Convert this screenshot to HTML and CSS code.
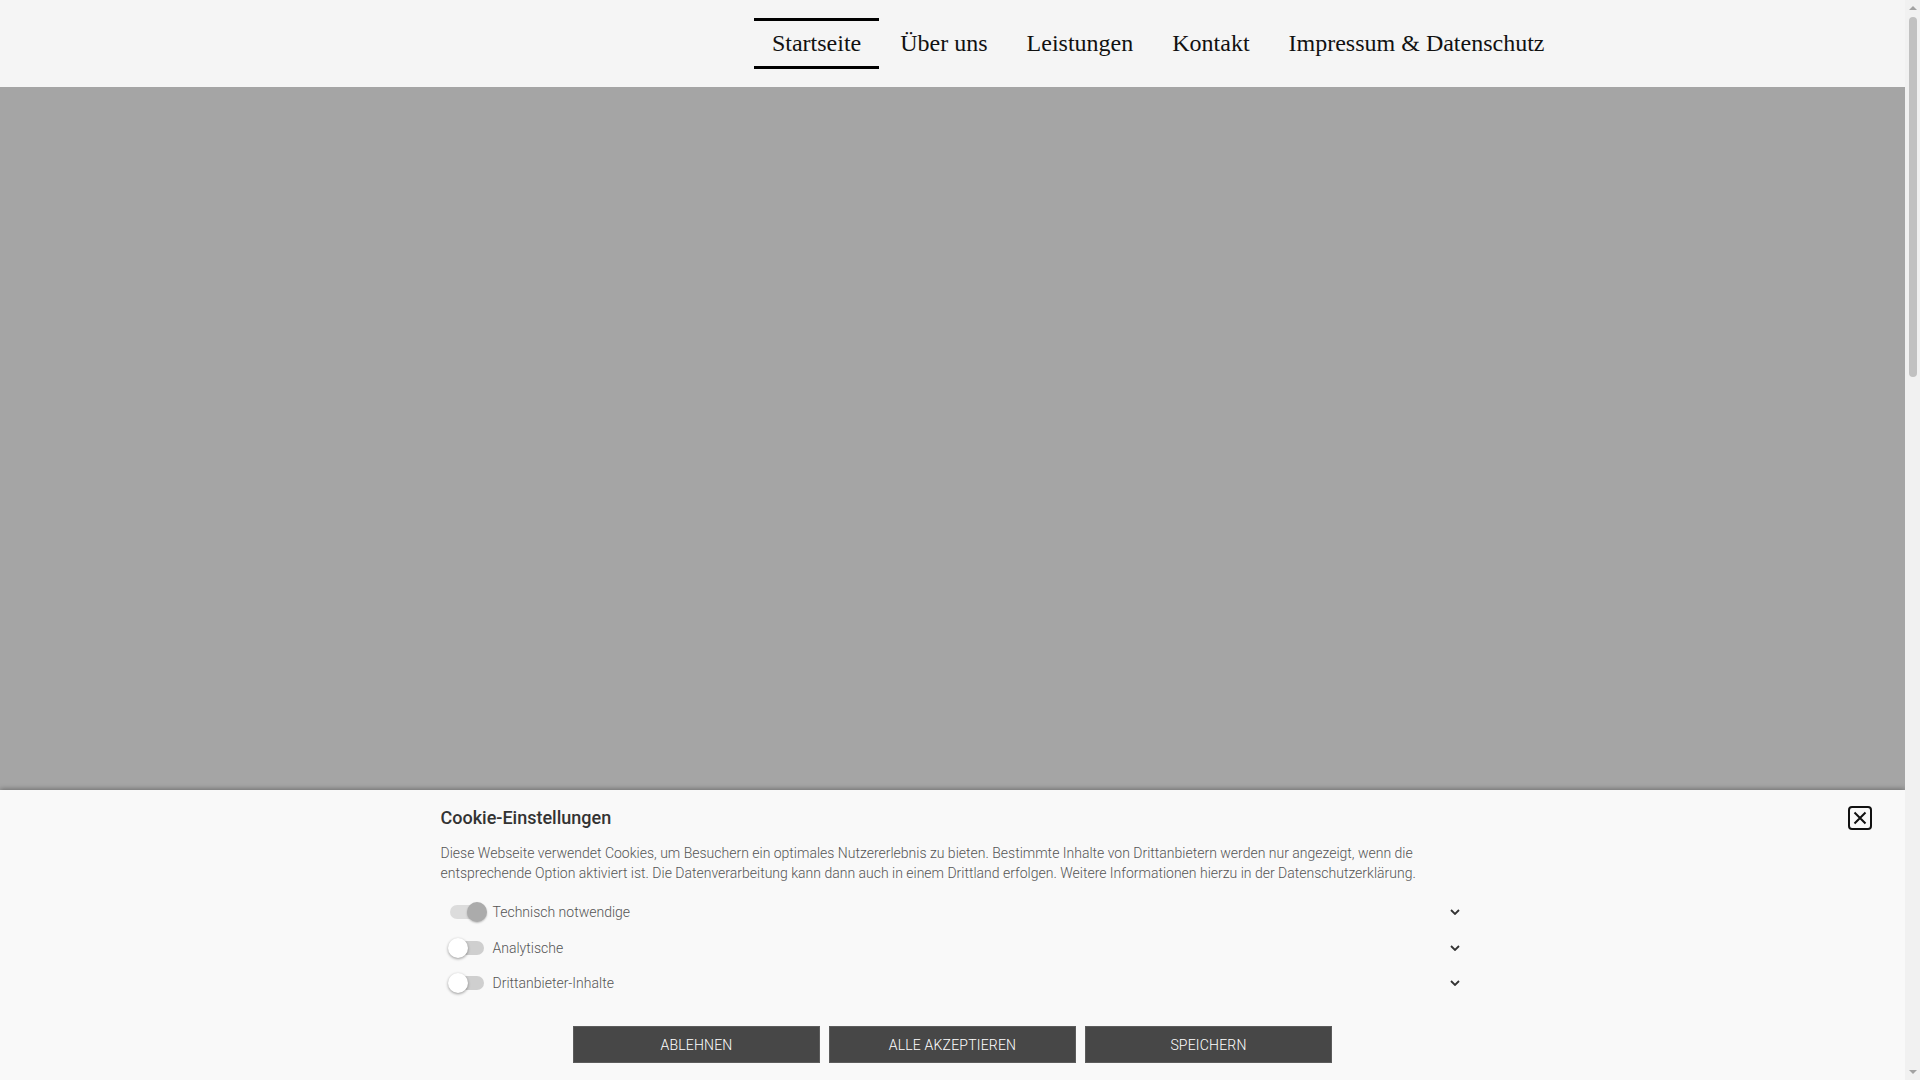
FILE: index.html
```html
<!DOCTYPE html>
<html lang="de">
<head>
<meta charset="utf-8">
<title>Startseite</title>
<link rel="stylesheet" href="styles.css">
</head>
<body>
<div class="viewport">
  <header class="site-header">
    <div class="header-inner">
      <nav class="main-nav">
        <a class="nav-item active" href="#">Startseite</a>
        <a class="nav-item" href="#">Über uns</a>
        <a class="nav-item" href="#">Leistungen</a>
        <a class="nav-item" href="#">Kontakt</a>
        <a class="nav-item" href="#">Impressum &amp; Datenschutz</a>
      </nav>
    </div>
  </header>
  <main class="page">
    <section class="hero"></section>
  </main>
  <div class="cookie-banner">
    <div class="cookie-inner">
      <h2 class="cookie-title">Cookie-Einstellungen</h2>
      <p class="cookie-text">Diese Webseite verwendet Cookies, um Besuchern ein optimales Nutzererlebnis zu bieten. Bestimmte Inhalte von Drittanbietern werden nur angezeigt, wenn die entsprechende Option aktiviert ist. Die Datenverarbeitung kann dann auch in einem Drittland erfolgen. Weitere Informationen hierzu in der Datenschutzerklärung.</p>
      <ul class="cookie-options">
        <li class="option">
          <span class="toggle on"><span class="knob"></span></span>
          <span class="option-label">Technisch notwendige</span>
          <svg class="chev" viewBox="0 0 10 6" width="10" height="6"><path d="M1 1 L5 5 L9 1" fill="none" stroke="#333" stroke-width="1.8"/></svg>
        </li>
        <li class="option">
          <span class="toggle"><span class="knob"></span></span>
          <span class="option-label">Analytische</span>
          <svg class="chev" viewBox="0 0 10 6" width="10" height="6"><path d="M1 1 L5 5 L9 1" fill="none" stroke="#333" stroke-width="1.8"/></svg>
        </li>
        <li class="option">
          <span class="toggle"><span class="knob"></span></span>
          <span class="option-label">Drittanbieter-Inhalte</span>
          <svg class="chev" viewBox="0 0 10 6" width="10" height="6"><path d="M1 1 L5 5 L9 1" fill="none" stroke="#333" stroke-width="1.8"/></svg>
        </li>
      </ul>
      <div class="cookie-buttons">
        <button class="cookie-btn">Ablehnen</button>
        <button class="cookie-btn">Alle akzeptieren</button>
        <button class="cookie-btn">Speichern</button>
      </div>
    </div>
    <button class="cookie-close" aria-label="Schließen">
      <svg viewBox="0 0 24 24" width="24" height="24"><rect x="1" y="1" width="22" height="22" rx="3" fill="none" stroke="#111" stroke-width="2"/><path d="M6.5 6.5 L17.5 17.5 M17.5 6.5 L6.5 17.5" stroke="#111" stroke-width="2" fill="none"/></svg>
    </button>
  </div>
</div>
<div class="scrollbar" aria-hidden="true">
  <span class="sb-arrow up"></span>
  <span class="sb-track"><span class="sb-thumb"></span></span>
  <span class="sb-arrow down"></span>
</div>
</body>
</html>
```

FILE: styles.css
```css
html, body {
  margin: 0;
  padding: 0;
}
body {
  display: flex;
  height: 100vh;
  overflow: hidden;
  background: #f5f5f5;
  font-family: "Liberation Serif", "Times New Roman", serif;
}
.viewport {
  flex: 1;
  position: relative;
  overflow: hidden;
}
.scrollbar {
  flex: none;
  width: 15px;
  background: #f1f1f1;
  display: flex;
  flex-direction: column;
  align-items: center;
}
.sb-arrow {
  flex: none;
  width: 0;
  height: 0;
  margin: 6px 0;
  border-left: 4px solid transparent;
  border-right: 4px solid transparent;
}
.sb-arrow.up {
  border-bottom: 4px solid #a3a3a3;
}
.sb-arrow.down {
  border-top: 4px solid #a3a3a3;
}
.sb-track {
  flex: 1;
  width: 100%;
  display: flex;
  flex-direction: column;
  align-items: center;
}
.sb-thumb {
  width: 8px;
  height: 360px;
  margin-top: 1px;
  border-radius: 4px;
  background: #c1c1c1;
}
.site-header {
  background: #f5f5f5;
  height: 87px;
}
.header-inner {
  max-width: 1220px;
  margin: 0 auto;
  display: flex;
  justify-content: flex-end;
}
.main-nav {
  display: flex;
  gap: 3px;
  padding-top: 18px;
}
.nav-item {
  display: block;
  padding: 0 18px;
  height: 45px;
  line-height: 45px;
  border-top: 3px solid transparent;
  border-bottom: 3px solid transparent;
  font-size: 24px;
  color: #111;
  text-decoration: none;
  white-space: nowrap;
}
.nav-item.active {
  border-top-color: #000;
  border-bottom-color: #000;
}
.hero {
  background: #a5a5a5;
  height: 1000px;
}
.cookie-banner {
  position: absolute;
  left: 0;
  right: 0;
  bottom: 0;
  background: #f9f9f9;
  box-shadow: 0 -1px 5px rgba(0, 0, 0, 0.35);
  padding: 17px 0 17px;
  font-family: Roboto, "Liberation Sans", sans-serif;
}
.cookie-inner {
  width: 1024px;
  margin: 0 auto;
}
.cookie-title {
  margin: 0;
  font-size: 18px;
  font-weight: 500;
  line-height: 22px;
  color: #333;
}
.cookie-text {
  margin: 14px 0 0;
  font-size: 14px;
  font-weight: 300;
  line-height: 20px;
  color: #555;
}
.cookie-options {
  list-style: none;
  margin: 12px 0 0;
  padding: 0;
}
.option {
  display: flex;
  align-items: center;
  height: 35.5px;
  padding: 0 5px 0 9px;
}
.toggle {
  position: relative;
  width: 34px;
  height: 14px;
  border-radius: 7px;
  background: #cfcfcf;
  margin-right: 9px;
  flex: none;
}
.toggle.on {
  background: #dcdcdc;
}
.knob {
  position: absolute;
  top: -3px;
  left: -2px;
  width: 20px;
  height: 20px;
  border-radius: 50%;
  background: #fff;
  box-shadow: 0 1px 3px rgba(0, 0, 0, 0.4);
}
.toggle.on .knob {
  left: auto;
  right: -3px;
  background: #ababab;
  box-shadow: 0 1px 2px rgba(0, 0, 0, 0.25);
}
.option-label {
  flex: 1;
  font-size: 14px;
  font-weight: 300;
  color: #555;
}
.chev {
  flex: none;
}
.cookie-buttons {
  display: flex;
  justify-content: center;
  gap: 9px;
  margin-top: 25px;
}
.cookie-btn {
  width: 247px;
  height: 37px;
  background: #474747;
  border: 1px solid #5c5c5c;
  color: #fff;
  font-family: Roboto, "Liberation Sans", sans-serif;
  font-size: 14px;
  font-weight: 300;
  text-transform: uppercase;
  letter-spacing: 0.2px;
  cursor: pointer;
}
.cookie-close {
  position: absolute;
  top: 16px;
  right: 33px;
  width: 24px;
  height: 24px;
  padding: 0;
  border: 0;
  background: transparent;
  cursor: pointer;
}
.cookie-close svg {
  display: block;
}
```
